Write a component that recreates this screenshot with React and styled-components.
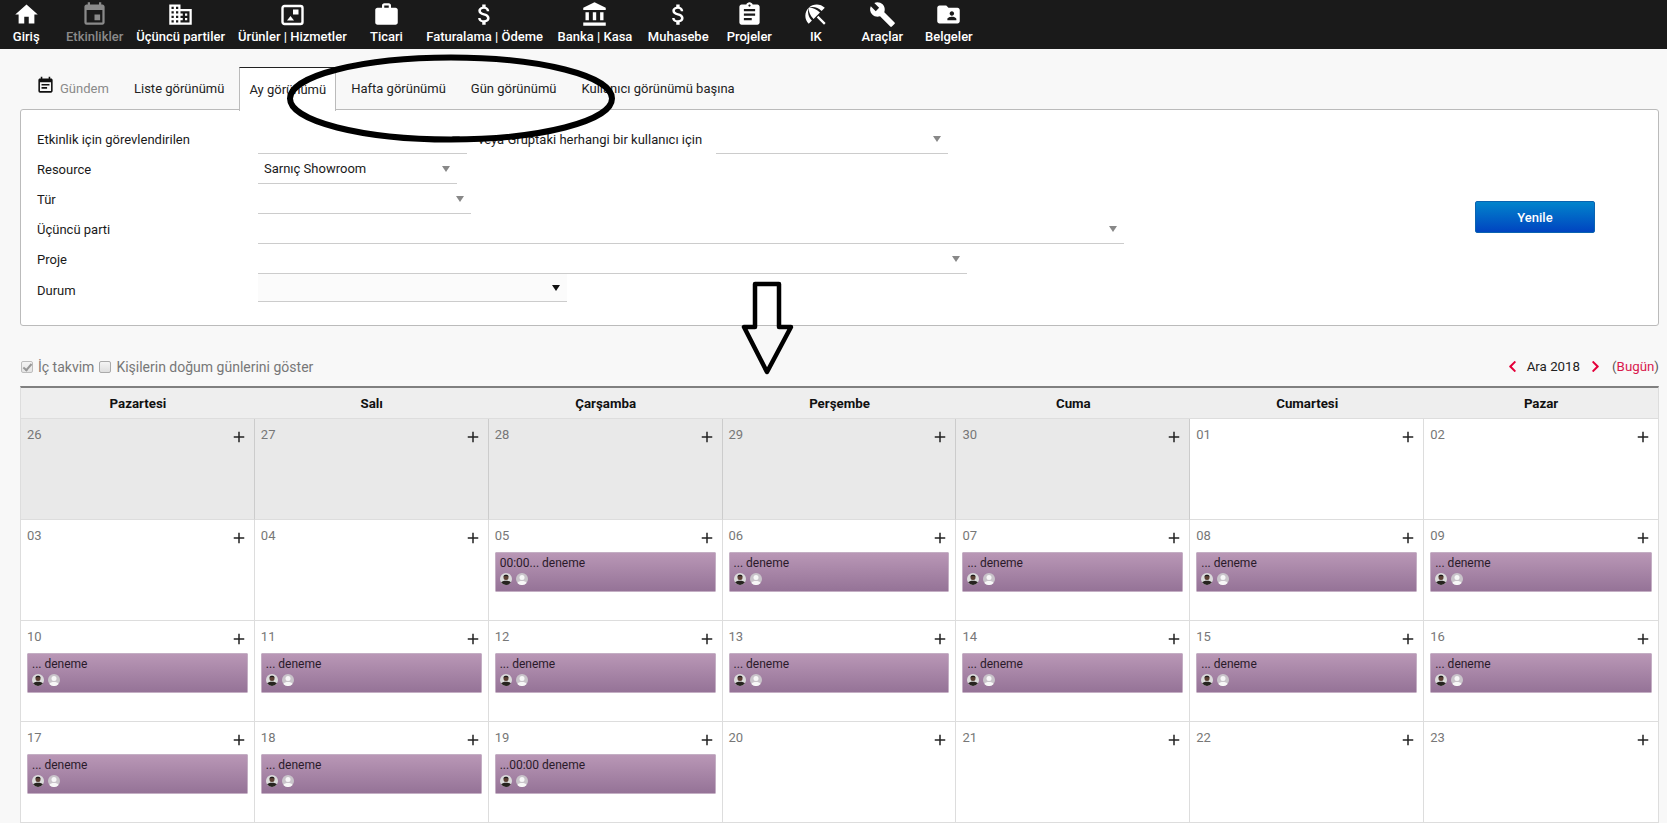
import React from "react";
import styled, { createGlobalStyle } from "styled-components";
import {
  MdHome, MdEvent, MdDomain, MdWork, MdAttachMoney, MdAccountBalance,
  MdAssignment, MdBeachAccess, MdBuild, MdFolderShared, MdEventNote, MdAdd,
} from "react-icons/md";
import { FaChevronLeft, FaChevronRight } from "react-icons/fa";

const GlobalStyle = createGlobalStyle`
  html, body { margin: 0; padding: 0; height: 100%; overflow: hidden; }
  body { background: #f8f8f8; font-family: Roboto, "Liberation Sans", Arial, sans-serif; color: #1a1a1a; }
`;

const Page = styled.div`
  position: relative;
  width: 1667px;
  height: 823px;
  overflow: hidden;
`;

const NavBar = styled.nav`
  display: flex;
  height: 49px;
  background: #1a1a1a;
`;
const NavItem = styled.a`
  display: flex;
  flex-direction: column;
  align-items: center;
  min-width: 53.5px;
  padding: 0 ${(p) => p.$pad || 6.5}px;
  margin-left: ${(p) => (p.$first ? "-7px" : "0")};
  color: ${(p) => (p.$dim ? "#8a8a8a" : "#fff")};
  font-size: 13px;
  font-weight: 500;
  white-space: nowrap;
`;
const NavIcon = styled.span`
  display: flex;
  height: 29px;
  align-items: center;
  justify-content: center;
  font-size: 27px;
`;

const TabBar = styled.div`
  display: flex;
  align-items: stretch;
  height: 42px;
  margin: 18px 8px 0 20px;
  padding-left: 16px;
  font-size: 13px;
`;
const TabTitle = styled.div`
  display: flex;
  align-items: center;
  gap: 5px;
  width: 88px;
  color: #8a8a8a;
  svg { color: #111; margin-top: -5px; }
`;
const Tab = styled.a`
  display: flex;
  align-items: center;
  padding: 0 10px;
  margin-right: 5px;
  color: #222;
  white-space: nowrap;
  ${(p) => p.$active && `
    position: relative;
    z-index: 1;
    height: 43px;
    background: #fff;
    border: 1px solid #bbb;
    border-top: 1px solid #222;
    border-bottom: 0;
    padding: 0 9px;
  `}
`;

const FilterPanel = styled.section`
  display: flex;
  height: 217px;
  box-sizing: border-box;
  margin: 0 8px 0 20px;
  padding: 14px 63px 0 16px;
  background: #fff;
  border: 1px solid #bbb;
  border-radius: 3px;
  font-size: 13px;
`;
const FilterForm = styled.div`
  flex: 1;
`;
const FilterRow = styled.div`
  display: flex;
  align-items: center;
  height: ${(p) => p.$height || 30}px;
`;
const FilterLabel = styled.label`
  width: ${(p) => p.$width || 221}px;
  margin-left: ${(p) => p.$gap || 0}px;
  padding-top: ${(p) => p.$drop || 0}px;
  flex-shrink: 0;
  white-space: nowrap;
`;
const Select = styled.div`
  display: flex;
  align-items: center;
  justify-content: space-between;
  align-self: stretch;
  box-sizing: border-box;
  width: ${(p) => p.$width}px;
  padding: 0 7px 0 6px;
  background: ${(p) => (p.$native ? "#fbfbfb" : "transparent")};
  border-bottom: 1px solid #ccc;
`;
const Caret = styled.span`
  width: 0;
  height: 0;
  margin-left: auto;
  border-left: 4.5px solid transparent;
  border-right: 4.5px solid transparent;
  border-top: 6px solid ${(p) => (p.$dark ? "#111" : "#888")};
`;
const ButtonColumn = styled.div`
  display: flex;
  align-items: center;
  height: 186px;
`;
const RefreshButton = styled.button`
  width: 120px;
  height: 32px;
  padding: 0;
  color: #fff;
  font: 500 13px Roboto, sans-serif;
  background: linear-gradient(#0284cc, #0044c0);
  border: 1px solid #0a63b0;
  border-radius: 2px;
`;

const CalendarBar = styled.div`
  display: flex;
  align-items: center;
  justify-content: space-between;
  height: 60px;
  box-sizing: border-box;
  margin: 0 8px 0 20px;
  padding-top: 21px;
  font-size: 14px;
  color: #777;
`;
const CheckList = styled.div`
  display: flex;
`;
const CheckGroup = styled.label`
  display: flex;
  align-items: center;
  margin-right: 4px;
`;
const CheckBox = styled.span`
  position: relative;
  box-sizing: border-box;
  width: 12px;
  height: 12px;
  margin: 0 5px 0 1px;
  background: linear-gradient(#f4f4f4, #dedede);
  border: 1px solid #aaa;
  border-radius: 2px;
  ${(p) => p.$checked && `
    opacity: 0.75;
    &::after {
      content: "";
      position: absolute;
      left: 3px;
      top: 0;
      width: 3px;
      height: 7px;
      border: solid #777;
      border-width: 0 2px 2px 0;
      transform: rotate(40deg);
    }
  `}
`;
const MonthNav = styled.div`
  display: flex;
  align-items: center;
  color: #222;
  font-size: 13.3px;
  svg { color: #e4003a; font-size: 13px; }
`;
const MonthLabel = styled.span`
  margin: 0 9px 0 8px;
`;
const TodayLink = styled.span`
  margin-left: 10px;
  color: #555;
  b { color: #d8174c; font-weight: 400; }
`;

const Calendar = styled.div`
  display: grid;
  grid-template-columns: repeat(7, 1fr);
  grid-template-rows: 31px repeat(4, 101px);
  box-sizing: border-box;
  margin: 0 8px 0 20px;
  border-top: 2px solid #808080;
  border-left: 1px solid #ddd;
  border-right: 1px solid #ddd;
`;
const DayHeader = styled.div`
  display: flex;
  align-items: center;
  justify-content: center;
  background: #eee;
  border-bottom: 1px solid #ddd;
  font-size: 13.3px;
  font-weight: 700;
  color: #111;
`;
const DayCell = styled.div`
  box-sizing: border-box;
  min-width: 0;
  padding: 0 6px;
  background: ${(p) => (p.$muted ? "#e9e9e9" : "#fff")};
  border-bottom: 1px solid #ddd;
  border-right: 1px solid ${(p) => (p.$muted ? "#ccc" : "#ddd")};
  &:nth-child(7n) { border-right: 0; }
`;
const DayTop = styled.div`
  display: flex;
  align-items: center;
  justify-content: space-between;
  height: 32px;
  font-size: 13px;
  color: #777;
  padding-bottom: 2px;
  box-sizing: border-box;
  svg { color: #222; font-size: 18px; margin: 5px 0 0; }
`;
const EventCard = styled.div`
  height: 40px;
  box-sizing: border-box;
  padding: 3px 4px 0 4px;
  color: #2a1a2a;
  font-size: 12px;
  line-height: 15px;
  background: linear-gradient(#b997b6, #957397);
  border: 1px solid #c4afc4;
  border-radius: 1px;
  white-space: nowrap;
`;
const AvatarRow = styled.div`
  display: flex;
  gap: 4px;
  margin-top: 2px;
`;

const InkMarks = styled.svg`
  position: absolute;
  top: 0;
  left: 0;
  pointer-events: none;
  z-index: 3;
`;

const ProductIcon = () => (
  <svg width="27" height="27" viewBox="0 0 27 27" fill="none">
    <rect x="3.5" y="5" width="20" height="18" rx="2" stroke="#fff" strokeWidth="2.4" />
    <path d="M8 19.5L11.5 15L15 19.5Z" fill="#fff" />
    <rect x="14" y="8.5" width="5.5" height="5" fill="#fff" />
  </svg>
);

const Avatar = ({ dark }) => (
  <svg width="12" height="12" viewBox="0 0 12 12">
    <circle cx="6" cy="6" r="6" fill={dark ? "#dcdcdc" : "#c9c4ca"} />
    {dark ? (
      <>
        <circle cx="6" cy="4.4" r="2.5" fill="#5c4034" />
        <path d="M3.4 3.8C3.6 1.2 8.4 1.2 8.6 3.8C7.5 2.8 4.5 2.8 3.4 3.8Z" fill="#1d1a18" />
        <path d="M1.2 9.6C2 7 10 7 10.8 9.6A6 6 0 0 1 1.2 9.6Z" fill="#26231f" />
      </>
    ) : (
      <>
        <circle cx="6" cy="4.4" r="2.5" fill="#f7f7f7" />
        <path d="M1.5 10C2.2 7.4 9.8 7.4 10.5 10A6 6 0 0 1 1.5 10Z" fill="#f7f7f7" />
      </>
    )}
  </svg>
);

const navItems = [
  { label: "Giriş", Icon: MdHome },
  { label: "Etkinlikler", Icon: MdEvent, dim: true },
  { label: "Üçüncü partiler", Icon: MdDomain },
  { label: "Ürünler | Hizmetler", Icon: ProductIcon },
  { label: "Ticari", Icon: MdWork },
  { label: "Faturalama | Ödeme", Icon: MdAttachMoney },
  { label: "Banka | Kasa", Icon: MdAccountBalance, pad: 8 },
  { label: "Muhasebe", Icon: MdAttachMoney, pad: 7.5 },
  { label: "Projeler", Icon: MdAssignment },
  { label: "IK", Icon: MdBeachAccess },
  { label: "Araçlar", Icon: MdBuild },
  { label: "Belgeler", Icon: MdFolderShared },
];
const weekDays = ["Pazartesi", "Salı", "Çarşamba", "Perşembe", "Cuma", "Cumartesi", "Pazar"];
const days = [
  "26", "27", "28", "29", "30", "01", "02",
  "03", "04", "05", "06", "07", "08", "09",
  "10", "11", "12", "13", "14", "15", "16",
  "17", "18", "19", "20", "21", "22", "23",
];

/* etkinligi olan gunler 05-19 arasi */
const eventText = (day, index) => {
  if (index < 9 || index > 23) return null;
  if (day === "05") return "00:00... deneme";
  if (day === "19") return "...00:00 deneme";
  return "... deneme";
};

export default function App() {
  return (
    <Page>
      <GlobalStyle />
      <NavBar>
        {navItems.map(({ label, Icon, dim, pad }, i) => (
          <NavItem key={label} $first={i === 0} $dim={dim} $pad={pad}>
            <NavIcon><Icon /></NavIcon>
            {label}
          </NavItem>
        ))}
      </NavBar>

      <TabBar>
        <TabTitle><MdEventNote size={19} /> Gündem</TabTitle>
        <Tab>Liste görünümü</Tab>
        <Tab $active>Ay görünümü</Tab>
        <Tab>Hafta görünümü</Tab>
        <Tab>Gün görünümü</Tab>
        <Tab>Kullanıcı görünümü başına</Tab>
      </TabBar>

      <FilterPanel>
        <FilterForm>
          <FilterRow>
            <FilterLabel>Etkinlik için görevlendirilen</FilterLabel>
            <Select $width={209}><Caret /></Select>
            <FilterLabel $width={238} $gap={11}>veya Gruptaki herhangi bir kullanıcı için</FilterLabel>
            <Select $width={232}><Caret /></Select>
          </FilterRow>
          <FilterRow>
            <FilterLabel>Resource</FilterLabel>
            <Select $width={199}>Sarnıç Showroom<Caret /></Select>
          </FilterRow>
          <FilterRow>
            <FilterLabel>Tür</FilterLabel>
            <Select $width={213}><Caret /></Select>
          </FilterRow>
          <FilterRow>
            <FilterLabel>Üçüncü parti</FilterLabel>
            <Select $width={866}><Caret /></Select>
          </FilterRow>
          <FilterRow>
            <FilterLabel>Proje</FilterLabel>
            <Select $width={709}><Caret /></Select>
          </FilterRow>
          <FilterRow $height={28}>
            <FilterLabel $drop={5}>Durum</FilterLabel>
            <Select $width={309} $native><Caret $dark /></Select>
          </FilterRow>
        </FilterForm>
        <ButtonColumn>
          <RefreshButton>Yenile</RefreshButton>
        </ButtonColumn>
      </FilterPanel>

      <CalendarBar>
        <CheckList>
          <CheckGroup><CheckBox $checked /> İç takvim</CheckGroup>
          <CheckGroup><CheckBox /> Kişilerin doğum günlerini göster</CheckGroup>
        </CheckList>
        <MonthNav>
          <FaChevronLeft />
          <MonthLabel>Ara 2018</MonthLabel>
          <FaChevronRight />
          <TodayLink>(<b>Bugün</b>)</TodayLink>
        </MonthNav>
      </CalendarBar>

      <Calendar>
        {weekDays.map((d) => <DayHeader key={d}>{d}</DayHeader>)}
        {days.map((day, i) => {
          const text = eventText(day, i);
          return (
            <DayCell key={day} $muted={i < 5}>
              <DayTop>{day}<MdAdd /></DayTop>
              {text && (
                <EventCard>
                  {text}
                  <AvatarRow><Avatar dark /><Avatar /></AvatarRow>
                </EventCard>
              )}
            </DayCell>
          );
        })}
      </Calendar>

      {/* ekran goruntusu uzerine elle cizilmis isaretler */}
      <InkMarks width="1667" height="823" viewBox="0 0 1667 823" fill="none" stroke="#000">
        <ellipse cx="451" cy="98.5" rx="161" ry="41" strokeWidth="6" />
        <path
          d="M755 327V284H779V327H791L767 372L744 327Z"
          strokeWidth="4.5"
          strokeLinejoin="round"
        />
      </InkMarks>
    </Page>
  );
}
